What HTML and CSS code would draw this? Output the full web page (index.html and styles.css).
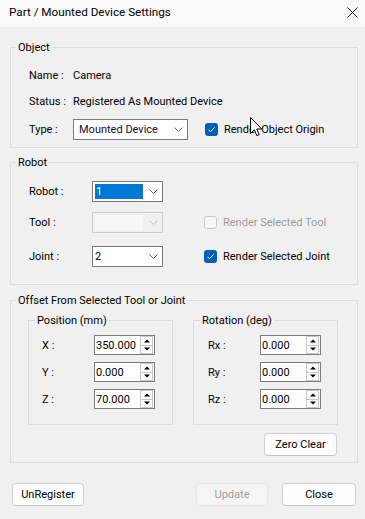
FILE: index.html
```html
<!DOCTYPE html>
<html>
<head>
<meta charset="utf-8">
<link rel="stylesheet" href="styles.css">
</head>
<body>
<div class="window">
  <div class="titlebar">
    <span class="title">Part / Mounted Device Settings</span>
    <svg class="close" width="11" height="11" viewBox="0 0 11 11"><path d="M0.5 0.5L10.5 10.5M10.5 0.5L0.5 10.5" stroke="#1a1a1a" stroke-width="1" fill="none"/></svg>
  </div>
  <div class="client">
    <fieldset class="group g-object">
      <legend>Object</legend>
      <div class="gbody">
        <div class="row r-name"><span class="lbl l-obj">Name :</span><span>Camera</span></div>
        <div class="row r-status"><span class="lbl l-obj">Status :</span><span>Registered As Mounted Device</span></div>
        <div class="row r-type">
          <span class="lbl l-obj">Type :</span>
          <div class="combo c-type"><span class="ctext">Mounted Device</span><svg class="chev" width="9" height="5" viewBox="0 0 9 5"><path d="M0.5 0.5L4.5 4.5L8.5 0.5" stroke="#606060" fill="none"/></svg></div>
          <label class="check ck-type"><span class="box on"><svg width="13" height="13" viewBox="0 0 13 13"><path d="M3.5 6.8L5.5 8.8L9.6 4.4" stroke="#fff" stroke-width="1" fill="none"/></svg></span><span>Render Object Origin</span></label>
        </div>
      </div>
    </fieldset>

    <fieldset class="group g-robot">
      <legend>Robot</legend>
      <div class="gbody">
        <div class="row r-robot">
          <span class="lbl l-rob">Robot :</span>
          <div class="combo c-rob"><span class="sel">1</span><svg class="chev" width="9" height="5" viewBox="0 0 9 5"><path d="M0.5 0.5L4.5 4.5L8.5 0.5" stroke="#606060" fill="none"/></svg></div>
        </div>
        <div class="row r-tool">
          <span class="lbl l-rob">Tool :</span>
          <div class="combo c-rob disabled"><span class="inner"></span><svg class="chev" width="9" height="5" viewBox="0 0 9 5"><path d="M0.5 0.5L4.5 4.5L8.5 0.5" stroke="#c0c0c0" fill="none"/></svg></div>
          <label class="check ck-rob dis"><span class="box off"></span><span>Render Selected Tool</span></label>
        </div>
        <div class="row r-joint">
          <span class="lbl l-rob">Joint :</span>
          <div class="combo c-rob"><span class="ctext">2</span><svg class="chev" width="9" height="5" viewBox="0 0 9 5"><path d="M0.5 0.5L4.5 4.5L8.5 0.5" stroke="#606060" fill="none"/></svg></div>
          <label class="check ck-rob"><span class="box on"><svg width="13" height="13" viewBox="0 0 13 13"><path d="M3.5 6.8L5.5 8.8L9.6 4.4" stroke="#fff" stroke-width="1" fill="none"/></svg></span><span>Render Selected Joint</span></label>
        </div>
      </div>
    </fieldset>

    <fieldset class="group g-offset">
      <legend>Offset From Selected Tool or Joint</legend>
      <div class="subs">
        <fieldset class="group sub sub-pos">
          <legend>Position (mm)</legend>
          <div class="sbody">
            <div class="srow"><span class="slbl">X :</span><div class="spin"><span class="stext">350.000</span><span class="btns"><span class="sb up"></span><span class="sb dn"></span></span></div></div>
            <div class="srow"><span class="slbl">Y :</span><div class="spin"><span class="stext">0.000</span><span class="btns"><span class="sb up"></span><span class="sb dn"></span></span></div></div>
            <div class="srow"><span class="slbl">Z :</span><div class="spin"><span class="stext">70.000</span><span class="btns"><span class="sb up"></span><span class="sb dn"></span></span></div></div>
          </div>
        </fieldset>
        <fieldset class="group sub sub-rot">
          <legend>Rotation (deg)</legend>
          <div class="sbody">
            <div class="srow"><span class="slbl">Rx :</span><div class="spin"><span class="stext">0.000</span><span class="btns"><span class="sb up"></span><span class="sb dn"></span></span></div></div>
            <div class="srow"><span class="slbl">Ry :</span><div class="spin"><span class="stext">0.000</span><span class="btns"><span class="sb up"></span><span class="sb dn"></span></span></div></div>
            <div class="srow"><span class="slbl">Rz :</span><div class="spin"><span class="stext">0.000</span><span class="btns"><span class="sb up"></span><span class="sb dn"></span></span></div></div>
          </div>
        </fieldset>
      </div>
      <div class="zrow"><button class="btn b-zero">Zero Clear</button></div>
    </fieldset>

    <div class="footer">
      <button class="btn b-unreg">UnRegister</button>
      <div class="fright">
        <button class="btn b-update" disabled>Update</button>
        <button class="btn b-close">Close</button>
      </div>
    </div>
  </div>
  <svg class="cursor" width="13" height="20" viewBox="0 0 13 20"><path d="M0.5 0.5V16.5L4.3 12.8L6.8 18.6L9.2 17.6L6.8 12H11.8Z" fill="#fff" stroke="#000" stroke-width="1"/></svg>
</div>
</body>
</html>
```

FILE: styles.css
```css
* { box-sizing: border-box; }
html, body { margin: 0; padding: 0; }
body {
  width: 365px;
  height: 519px;
  background: #f0f0f0;
  font-family: Roboto, "Liberation Sans", Arial, sans-serif;
  font-size: 11px;
  color: #000;
  overflow: hidden;
}
.window { width: 365px; height: 519px; display: flex; flex-direction: column; position: relative; }
.titlebar {
  height: 27px;
  background: #f9f9f9;
  display: flex;
  align-items: center;
  justify-content: space-between;
  padding: 0 7px 2px 9px;
  flex: none;
}
.title { font-size: 11.7px; line-height: 15px; }
.close { display: block; }

.client { padding: 13px 0 0 10px; display: flex; flex-direction: column; }

.group {
  margin: 0;
  padding: 0;
  border: 1px solid #dcdcdc;
  min-inline-size: 0;
  width: 348px;
}
.group > legend {
  padding: 0 2px;
  margin-left: 5px;
  line-height: 15px;
  font-size: 11px;
}

.row { display: flex; align-items: center; height: 22px; }
.lbl { flex: none; }
.l-obj { width: 44px; }

.gbody { padding: 9px 0 7px 18px; }
.r-status { margin-top: 4px; }
.r-type { margin-top: 6px; }

.combo {
  height: 21px;
  background: #fff;
  border: 1px solid #7a7a7a;
  display: flex;
  align-items: center;
  justify-content: space-between;
  padding: 0 4px 0 5px;
  flex: none;
}
.c-type { width: 115px; }
.c-type .ctext { color: #1b0a2b; }
.chev { display: block; flex: none; }

.check { display: flex; align-items: center; gap: 6px; flex: none; }
.ck-type { margin-left: 17px; }
.box { width: 13px; height: 13px; border-radius: 3px; display: block; flex: none; }
.box svg { display: block; }
.box.on { background: #005fb8; }
.box.off { border: 1px solid #c8c8c8; background: #f7f7f7; }
.check.dis { color: #9d9d9d; }

.cursor { position: absolute; left: 250px; top: 117px; display: block; }

.g-robot { margin-top: 7px; }
.g-robot .gbody { padding: 11px 0 17px 18px; }
.g-robot .row { height: 21px; }
.l-rob { width: 63px; }
.r-tool { margin-top: 10px; }
.r-joint { margin-top: 13px; }
.c-rob { width: 71px; padding: 0 4px 0 2px; }
.c-rob .sel { background: #0078d7; color: #fff; width: 48px; height: 15px; line-height: 15px; padding-left: 1px; }
.c-rob.disabled { background: #f0f0f0; border-color: #cccccc; }
.c-rob.disabled .inner { width: 48px; height: 15px; background: #f7f7f7; }
.ck-rob { margin-left: 41px; }

.g-offset { margin-top: 8px; }
.subs { display: flex; gap: 20px; padding: 5px 0 0 17px; }
.sub { width: 145px; }
.sub > legend { margin-left: 6px; }
.sbody { padding: 7px 0 15px 13px; display: flex; flex-direction: column; gap: 7px; }
.sub-rot .sbody { padding-left: 14px; }
.srow { display: flex; align-items: center; height: 20px; }
.slbl { width: 52px; flex: none; }
.spin {
  width: 61px;
  height: 20px;
  background: #fff;
  border: 1px solid #7a7a7a;
  display: flex;
  align-items: center;
  justify-content: space-between;
  padding: 0 0 0 1px;
}
.stext { line-height: 15px; font-size: 11px; }
.btns { display: flex; flex-direction: column; width: 15px; height: 18px; padding: 0 1px; }
.sb {
  flex: 1;
  position: relative;
  background: #fdfdfd;
  border: 1px solid #c9c9c9;
}
.sb.up { border-bottom: none; }
.sb::after {
  content: "";
  position: absolute;
  left: 50%;
  top: 50%;
  width: 0; height: 0;
  border-left: 3px solid transparent;
  border-right: 3px solid transparent;
  transform: translate(-50%, -50%);
}
.sb.up::after { border-bottom: 3px solid #000; }
.sb.dn::after { border-top: 3px solid #000; }

.zrow { display: flex; justify-content: flex-end; padding: 8px 20px 6px 0; }

.btn {
  font-family: inherit;
  font-size: 11px;
  height: 23px;
  background: #fdfdfd;
  border: 1px solid #d0d0d0;
  border-bottom-color: #c4c4c4;
  border-radius: 4px;
  color: #000;
  padding: 0;
  margin: 0;
}
.b-zero { width: 73px; }
.footer { display: flex; justify-content: space-between; margin-top: 20px; padding: 0 9px 0 2px; }
.fright { display: flex; gap: 14px; }
.b-unreg { width: 72px; }
.b-update { width: 72px; background: #f5f5f5; border-color: #e6e6e6; color: #a0a0a0; }
.b-close { width: 74px; }
```
